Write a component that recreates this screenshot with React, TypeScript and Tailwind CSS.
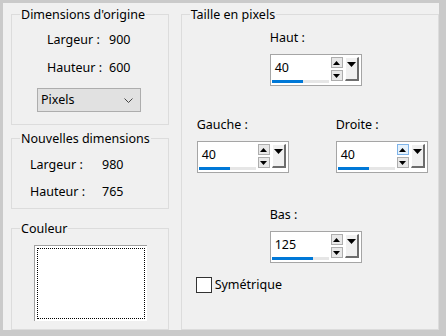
import React from 'react'

const font = { fontFamily: '"Noto Sans", "Open Sans", sans-serif' }

// Windows style group box
function GroupBox({
  title,
  className,
  children,
}: {
  title: string
  className: string
  children?: React.ReactNode
}) {
  return (
    <fieldset className={`border border-[#dcdcdc] px-0 ${className}`}>
      <legend className="ml-[8px] px-[1px] text-[12.5px] leading-[17px] text-black">{title}</legend>
      {children}
    </fieldset>
  )
}

function ArrowUp() {
  return (
    <svg width="7" height="4" viewBox="0 0 7 4">
      <polygon points="0,4 7,4 3.5,0" fill="#000" />
    </svg>
  )
}

function ArrowDown() {
  return (
    <svg width="7" height="4" viewBox="0 0 7 4">
      <polygon points="0,0 7,0 3.5,4" fill="#000" />
    </svg>
  )
}

// Numeric spin field with slider bar + up/down + dropdown button
function SpinBox({
  value,
  bar,
  hover = false,
}: {
  value: string
  bar: string
  hover?: boolean
}) {
  return (
    <div className="flex h-[32px] w-[92px] items-stretch border border-[#a5a5a5] bg-white">
      <div className="flex w-[60px] flex-col pl-[1px] pt-[3px]">
        <span className="pl-[3px] text-[12.5px] leading-[20px] text-black">{value}</span>
        <div className="mt-[2px] flex h-[3px] w-[57px] bg-[#e6e6e6]">
          <div className={`h-full bg-[#0078d7] ${bar}`} />
        </div>
      </div>
      <div className="flex flex-col gap-[2px] pt-[2px]">
        <div
          className={`flex h-[11px] w-[12px] items-center justify-center border ${
            hover ? 'border-[#7eb4ea] bg-[#e5f1fb]' : 'border-[#adadad] bg-[#e8e8e8]'
          }`}
        >
          <ArrowUp />
        </div>
        <div className="flex h-[11px] w-[12px] items-center justify-center border border-[#adadad] bg-[#e8e8e8]">
          <ArrowDown />
        </div>
      </div>
      <div className="ml-[2px] mt-[2px] flex h-[24px] w-[14px] justify-center border-b-2 border-l border-r-2 border-t border-b-[#6d6d6d] border-l-white border-r-[#6d6d6d] border-t-white bg-[#f0f0f0] pt-[4px]">
        <svg width="9" height="5" viewBox="0 0 9 5">
          <polygon points="0,0 9,0 4.5,5" fill="#000" />
        </svg>
      </div>
    </div>
  )
}

export default function App() {
  return (
    <div
      className="h-[336px] w-[446px] bg-[#cacaca] pb-[6px] pl-[3px] pr-[7px] pt-[3px] text-black"
      style={font}
    >
      <div className="flex h-full bg-[#f0f0f0] pl-[8px]">
        {/* Left column */}
        <div className="flex w-[158px] flex-col">
          <GroupBox title="Dimensions d'origine" className="mt-[3px] h-[119px]">
            <div className="mt-[8px] flex flex-col gap-[11px] pl-[35px] text-[12.5px] leading-[17px]">
              <div className="flex">
                <span className="w-[62px]">Largeur :</span>
                <span>900</span>
              </div>
              <div className="flex">
                <span className="w-[62px]">Hauteur :</span>
                <span>600</span>
              </div>
            </div>
            <div className="ml-[25px] mt-[12px] flex h-[24px] w-[104px] items-center justify-between border border-[#adadad] bg-[#e1e1e1] pl-[3px] pr-[7px] text-[12.5px]">
              <span>Pixels</span>
              <svg width="9" height="5" viewBox="0 0 9 5">
                <polyline points="0.5,0.5 4.5,4.5 8.5,0.5" fill="none" stroke="#444" strokeWidth="1" />
              </svg>
            </div>
          </GroupBox>

          <GroupBox title="Nouvelles dimensions" className="mt-[5px] h-[79px]">
            <div className="mt-[9px] flex flex-col gap-[10px] pl-[18px] text-[12.5px] leading-[17px]">
              <div className="flex">
                <span className="w-[72px]">Largeur :</span>
                <span>980</span>
              </div>
              <div className="flex">
                <span className="w-[72px]">Hauteur :</span>
                <span>765</span>
              </div>
            </div>
          </GroupBox>

          <GroupBox title="Couleur" className="mt-[11px] h-[110px]">
            <div className="ml-[22px] mt-[8px] h-[76px] w-[113px] border-l border-t border-[#a0a0a0] bg-white p-[2px]">
              <div className="h-full w-full border border-dotted border-black" />
            </div>
          </GroupBox>
        </div>

        {/* Right group */}
        <GroupBox title="Taille en pixels" className="ml-[12px] mt-[3px] h-[324px] w-[259px]">
          <div className="flex flex-col">
            <div className="ml-[88px] mt-[6px] flex flex-col gap-[8px]">
              <span className="text-[12.5px] leading-[17px]">Haut :</span>
              <SpinBox value="40" bar="w-[31px]" />
            </div>
            <div className="ml-[15px] mt-[30px] flex gap-[47px]">
              <div className="flex flex-col gap-[8px]">
                <span className="text-[12.5px] leading-[17px]">Gauche :</span>
                <SpinBox value="40" bar="w-[31px]" />
              </div>
              <div className="flex flex-col gap-[8px]">
                <span className="text-[12.5px] leading-[17px]">Droite :</span>
                <SpinBox value="40" bar="w-[31px]" hover />
              </div>
            </div>
            <div className="ml-[88px] mt-[33px] flex flex-col gap-[8px]">
              <span className="text-[12.5px] leading-[17px]">Bas :</span>
              <SpinBox value="125" bar="w-[41px]" />
            </div>
            <label className="ml-[14px] mt-[13px] flex items-center gap-[3px] text-[12.5px] leading-[17px]">
              <span className="h-[16px] w-[16px] border border-[#333] bg-white" />
              <span>Symétrique</span>
            </label>
          </div>
        </GroupBox>
      </div>
    </div>
  )
}
